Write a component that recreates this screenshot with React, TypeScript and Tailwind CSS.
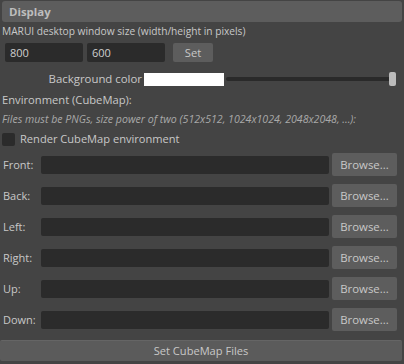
import React from 'react'

const font = { fontFamily: '"Open Sans", "Noto Sans", sans-serif' }

const sides = ['Front:', 'Back:', 'Left:', 'Right:', 'Up:', 'Down:']

export default function App() {
  return (
    <div
      className="w-[404px] h-[364px] bg-[#444444] text-[#c8c8c8] text-[11px] leading-[14px] overflow-hidden flex flex-col"
      style={font}
    >
      {/* section header */}
      <div className="mx-[2px] mt-[1px] h-[21px] rounded-[3px] bg-[#5d5d5d] pl-[7px] flex items-center font-bold text-[11.4px] text-[#bdbdbd]">
        Display
      </div>

      <div className="pl-[2px] mt-[2px] h-[14px] text-[10.2px]">MARUI desktop window size (width/height in pixels)</div>

      <div className="flex items-center mt-[5px] h-[19px]">
        <div className="ml-[5px] w-[78px] h-[19px] rounded-[2px] bg-[#2b2b2b] pl-[5px] flex items-center text-[#cfcfcf]">800</div>
        <div className="ml-[4px] w-[78px] h-[19px] rounded-[2px] bg-[#2b2b2b] pl-[5px] flex items-center text-[#cfcfcf]">600</div>
        <div className="ml-[8px] w-[40px] h-[19px] rounded-[2px] bg-[#5d5d5d] flex items-center justify-center text-[11.2px]">Set</div>
      </div>

      {/* background color */}
      <div className="flex items-center mt-[10px] h-[14px]">
        <div className="w-[143px] text-right pr-[1px] text-[11.4px]">Background color</div>
        <div className="ml-[1px] w-[80px] h-[13px] bg-white" />
        <div className="relative ml-[2px] w-[170px] h-[14px] flex items-center">
          <div className="w-[166px] h-[4px] rounded-full bg-[#2a2a2a]" />
          <div className="absolute left-[163px] top-[0px] w-[7px] h-[14px] rounded-[2px] bg-[#bcbcbc]" />
        </div>
      </div>

      <div className="pl-[2px] mt-[7px] h-[14px] text-[11.2px]">Environment (CubeMap):</div>
      <div className="pl-[2px] mt-[5px] h-[14px] italic text-[10.6px] text-[#a9a9a9]">
        Files must be PNGs, size power of two (512x512, 1024x1024, 2048x2048, ...):
      </div>

      <div className="flex items-center mt-[6px] h-[14px]">
        <div className="ml-[2px] w-[13px] h-[13px] rounded-[2px] bg-[#2b2b2b]" />
        <div className="ml-[5px] text-[11.1px]">Render CubeMap environment</div>
      </div>

      <div className="flex flex-col mt-[7px] gap-[8px]">
        {sides.map((s) => (
          <div key={s} className="flex items-center h-[23px]">
            <div className="pl-[3px] w-[41px] text-[11px]">{s}</div>
            <div className="w-[288px] h-[18px] rounded-[2px] bg-[#2b2b2b]" />
            <div className="ml-[3px] w-[65px] h-[23px] rounded-[2px] bg-[#5d5d5d] flex items-center justify-center text-[11.4px]">
              Browse...
            </div>
          </div>
        ))}
      </div>

      <div className="mt-[9px] w-[402px] h-[21px] rounded-[2px] bg-[#5b5b5b] border-t border-[#656565] flex items-center justify-center text-[11.1px]">
        Set CubeMap Files
      </div>
    </div>
  )
}
